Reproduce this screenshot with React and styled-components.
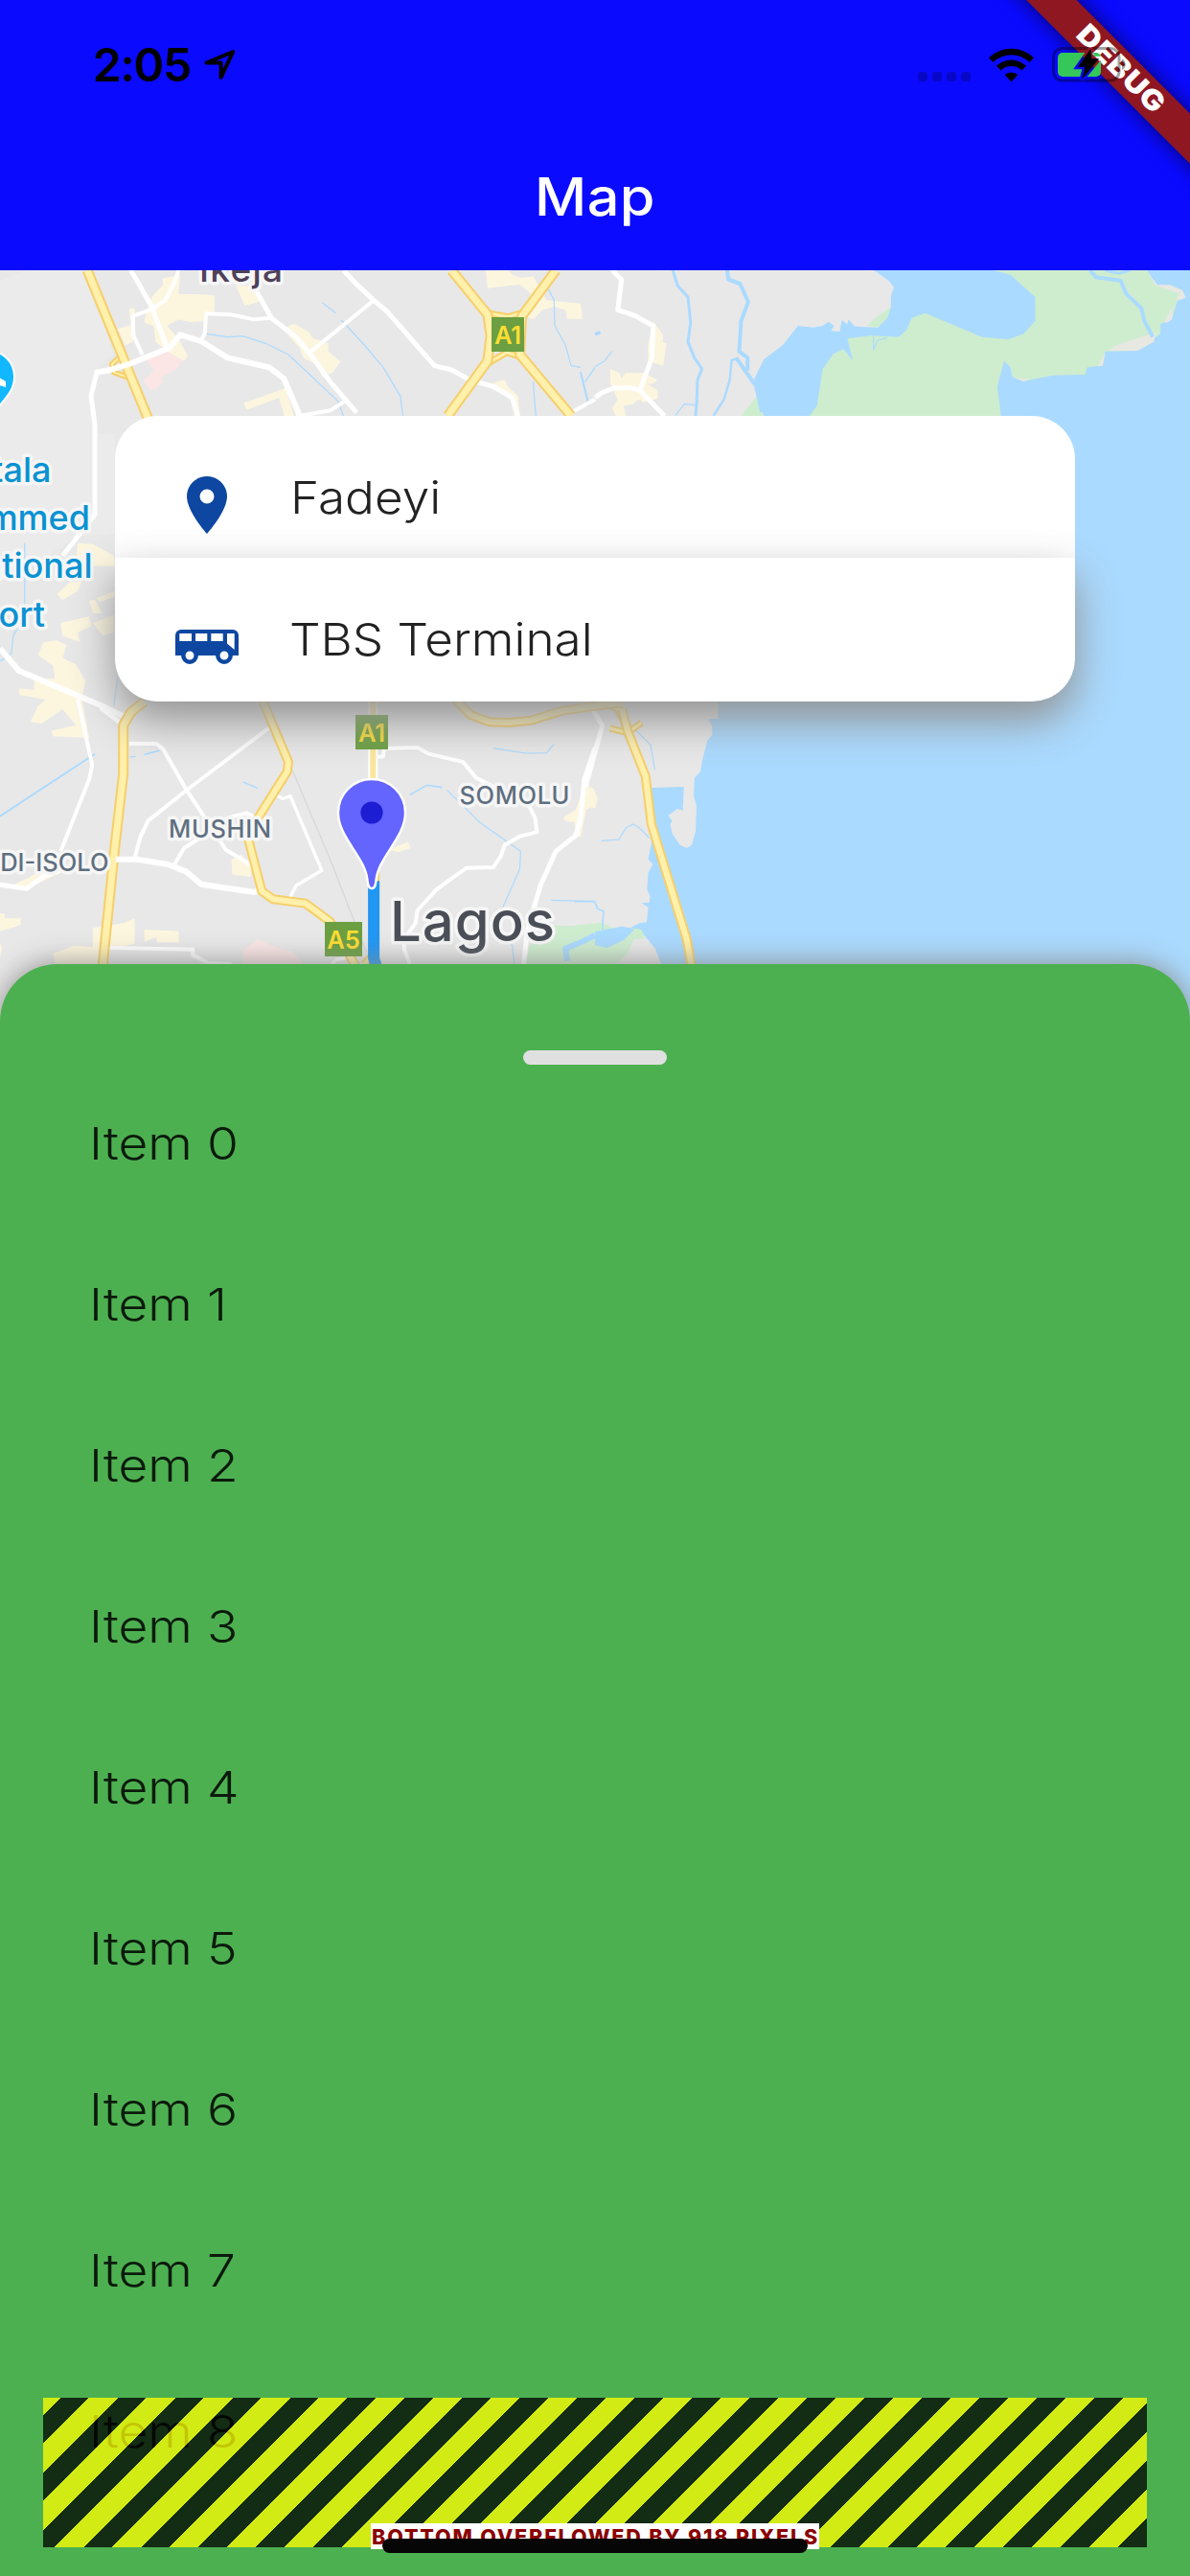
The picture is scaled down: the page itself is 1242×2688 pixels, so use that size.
import React from 'react';
import styled, { createGlobalStyle } from 'styled-components';

const GlobalStyle = createGlobalStyle`
  *, *::before, *::after { box-sizing: border-box; }
  body { margin: 0; background: #4db050; }
`;

const Screen = styled.div`
  position: relative;
  display: flex;
  flex-direction: column;
  width: 1242px;
  height: 2688px;
  overflow: hidden;
  font-family: Inter, "Liberation Sans", sans-serif;
`;

/* ---------- header ---------- */

const Header = styled.header`
  flex: none;
  height: 282px;
  background: #0a0aff;
`;

const StatusBar = styled.div`
  display: flex;
  justify-content: space-between;
  height: 132px;
  padding: 38px 66px 0 97px;
`;

const StatusLeft = styled.div`
  display: flex;
  align-items: flex-start;
`;

const Clock = styled.span`
  width: 117px;
  font-size: 48px;
  font-weight: 600;
  line-height: 60px;
  letter-spacing: -1.2px;
  color: #000;
`;

const StatusIcons = styled.div`
  position: relative;
  z-index: 2;
  display: flex;
  align-items: flex-end;
  height: 48px;
`;

const Glyph = styled.svg`
  display: block;
  flex: none;
  margin: ${(p) => p.$margin || 0};
`;

const Title = styled.h1`
  margin: 0;
  text-align: center;
  font-size: 55px;
  font-weight: 500;
  line-height: 146px;
  letter-spacing: 0.4px;
  transform: scaleX(1.08);
  color: #fff;
`;

const Ribbon = styled.div`
  position: absolute;
  z-index: 1;
  top: 54px;
  right: -78px;
  width: 300px;
  height: 36.6px;
  transform: rotate(45deg) scaleX(1.11);
  background: #8e1722;
  box-shadow: 0 0 20px rgba(0, 0, 0, 0.6);
  text-align: center;
  font-size: 29.4px;
  font-weight: 900;
  line-height: 36.6px;
  letter-spacing: 0.6px;
  color: #fff;
`;

/* ---------- map ---------- */

const MapArea = styled.section`
  flex: none;
  display: grid;
  height: 784px;
`;

const MapCanvas = styled.svg`
  grid-area: 1 / 1;
  display: block;
  font-family: Inter, "Liberation Sans", sans-serif;

  polyline {
    fill: none;
    stroke-linejoin: round;
    vector-effect: non-scaling-stroke;
  }
`;

const SearchCard = styled.div`
  grid-area: 1 / 1;
  align-self: start;
  margin: 152px 120px 0;
  z-index: 1;
`;

const SearchRow = styled.div`
  display: flex;
  align-items: flex-start;
  gap: 50px;
  height: ${(p) => (p.$last ? 150 : 148)}px;
  padding: 57px 60px 0;
  background: #fff;
  border-radius: ${(p) => (p.$last ? '0 0 45px 45px' : '45px 45px 0 0')};
  box-shadow: ${(p) => (p.$last ? '0 20px 45px #929292' : 'none')};
`;

const IconBox = styled.span`
  display: flex;
  align-items: center;
  justify-content: center;
  width: 72px;
  height: 72px;
`;

const Place = styled.span`
  margin-left: ${(p) => p.$inset || 0}px;
  font-size: 47px;
  font-weight: 300;
  line-height: 56px;
  transform: scaleX(1.09);
  transform-origin: left;
  color: #222;
`;

/* ---------- sheet ---------- */

const Sheet = styled.section`
  position: relative;
  z-index: 1;
  flex: 1;
  display: flex;
  flex-direction: column;
  margin-top: -60px;
  padding-top: 90px;
  background: #4db050;
  border-radius: 60px 60px 0 0;
  box-shadow: 0 0 30px #8a8a8a;
`;

const Handle = styled.div`
  flex: none;
  align-self: center;
  width: 150px;
  height: 15px;
  border-radius: 8px;
  background: #e0e0e0;
`;

const List = styled.ul`
  flex: 1;
  min-height: 0;
  overflow: hidden;
  margin: 0;
  padding: 0 0 0 93px;
  list-style: none;
`;

const Item = styled.li`
  height: 168px;
  font-size: 47px;
  font-weight: 300;
  line-height: 164px;
  transform: scaleX(1.135);
  transform-origin: left;
  color: #0b1a0c;
`;

const OverflowStripes = styled.div`
  position: absolute;
  left: 45px;
  right: 45px;
  bottom: 30px;
  height: 156.5px;
  display: flex;
  align-items: flex-end;
  justify-content: center;
  background: repeating-linear-gradient(
    135deg,
    rgba(255, 255, 0, 0.75) 0 12.73px,
    rgba(0, 0, 0, 0.75) 12.73px 33.94px,
    rgba(255, 255, 0, 0.75) 33.94px 42.426px
  );
`;

const OverflowLabel = styled.span`
  width: 468px;
  height: 27px;
  margin-bottom: -1.5px;
  background: #fff;
  text-align: center;
  text-indent: 1px;
  white-space: nowrap;
  font-size: 21.5px;
  font-weight: 800;
  line-height: 28px;
  letter-spacing: 1.85px;
  color: #8b0000;
`;

const HomeIndicator = styled.div`
  position: absolute;
  left: 399px;
  bottom: 24px;
  width: 444px;
  height: 15px;
  border-radius: 8px;
  background: #060606;
`;

/* ---------- map drawing ---------- */

const LAND = '#e8e8e8';
const WATER = '#aadaff';
const PARK = '#ceedcf';
const SAND = '#fdf6df';
const PINK = '#fbe6e5';

const Road = ({ points, w = 5 }) => <polyline points={points} stroke="#fff" strokeWidth={w} />;
const Stream = ({ points, w = 1.2 }) => <polyline points={points} stroke={WATER} strokeWidth={w} />;
const Highway = ({ points, w = 10 }) => (
  <>
    <polyline points={points} stroke="#f6cf6b" strokeWidth={w} />
    <polyline points={points} stroke="#fff0ab" strokeWidth={w - 4} />
  </>
);

const Label = ({ x, y, size = 25.5, width, color = '#5f6f80', weight = 500, anchor, children }) => (
  <text
    x={x}
    y={y}
    fontSize={size}
    fontWeight={weight}
    textLength={width}
    textAnchor={anchor}
    fill={color}
    stroke="#f6f6f6"
    strokeWidth="7"
    strokeLinejoin="round"
    paintOrder="stroke"
  >
    {children}
  </text>
);

const Shield = ({ x, y, w = 34, children }) => (
  <g>
    <rect x={x} y={y} width={w} height="36" fill="#6b9f41" />
    <text x={x + w / 2} y={y + 27.5} textAnchor="middle" fontSize="25.5" fontWeight="600" fill="#fddd33">
      {children}
    </text>
  </g>
);

const NorthWest = () => (
  <g transform="translate(0 -12) scale(.39605 .33333)">
    <polygon fill="#ebebeb" points="0,70 60,40 230,40 300,300 250,350 240,430 250,550 303,550 303,860 200,870 100,950 0,950" />
    <g fill={SAND}>
      <polygon points="400,120 430,80 428,62 475,50 470,110 535,112 566,115 565,165 538,170 537,196 500,198 470,190 440,210 470,250 495,305 485,320 440,290 410,260 405,210 380,200 385,170" />
      <polygon points="310,220 345,207 340,155 355,155 355,180 350,260 330,270" />
      <polygon points="622,85 665,85 695,130 645,147" />
      <polygon points="745,220 775,203 815,230 825,250 865,265 865,290 897,322 878,355 850,370 830,330 800,310 790,280" />
      <polygon points="642,452 752,405 775,492 750,492 735,435 650,473" />
      <polygon points="1280,36 1340,36 1350,50 1375,60 1405,55 1430,110 1440,130 1530,140 1535,188 1495,188 1490,160 1460,150 1430,160 1405,190 1385,180 1400,110 1370,80 1285,92" />
      <polygon points="1285,395 1310,385 1330,378 1338,400 1365,430 1370,492 1355,492 1345,440" />
      <polygon points="205,890 245,893 300,930 303,963 200,960" />
      <polygon points="150,1050 185,1012 215,1010 205,1040 165,1068" />
      <polygon points="235,1070 250,1068 270,1110 245,1110" />
      <polygon points="255,1062 303,1040 303,1058 262,1075" />
    </g>
    <polygon fill={PINK} points="383,310 440,290 482,318 465,345 425,372 430,385 412,408 395,410 378,380 405,350" />
    <Stream points="545,235 600,245 640,242 700,265 760,300 890,445 905,492" />
    <Stream points="850,138 885,170" />
    <Stream points="900,192 960,270 1010,340 1055,430 1062,492" />
    <Stream points="1445,95 1460,130 1462,210 1490,270 1505,335 1530,340" />
    <Stream points="1530,355 1552,460" w={2} />
    <Stream points="1568,340 1542,385" />
    <Stream points="1405,385 1412,492" />
    <Stream points="65,890 65,1110" />
    <Road points="345,36 400,150 440,280" />
    <Road points="470,36 460,75 435,130 400,158 350,180 352,240 375,300" w={4} />
    <Road points="255,355 240,430 250,520 250,800 165,930" />
    <Road points="530,258 540,230 543,172 610,175 670,190 715,185" w={4} />
    <Road points="675,100 715,185 780,245 815,295 870,385 940,482" />
    <Road points="815,295 985,130" w={4} />
    <Road points="905,36 940,80 985,130 1020,165 1145,335 1190,348 1240,380 1300,400 1350,435 1365,492" />
    <Road points="790,492 870,475 910,445" w={4} />
    <Road points="1500,485 1568,440" w={4} />
    <Highway points="325,298 295,330 300,355 335,370" w={6} />
    <Highway points="230,36 390,500" w={11} />
    <Road points="250,357 290,348 340,330 445,280 475,238 530,258 600,310 710,340 748,375 790,492" w={6} />
    <Highway points="1285,170 1340,182 1378,168" w={7} />
    <Highway points="1290,325 1335,293 1380,310" w={7} />
    <Highway points="1190,36 1285,175 1293,240 1285,320 1180,492" w={11} />
    <Highway points="1465,36 1375,180 1370,300 1505,492" w={11} />
  </g>
);

const NorthEast = () => (
  <g transform="translate(621 -12) scale(.39605 .33333)">
    <polygon fill={WATER} points="735,36 775,70 788,90 780,115 780,150 770,185 745,215 685,212 668,190 665,205 650,192 645,228 622,226 630,210 615,197 600,210 575,215 535,210 495,270 445,315 420,375 425,430 445,492 445,1300 1568,1300 1568,36" />
    <g fill={PARK}>
      <polygon points="385,492 425,432 445,492" />
      <polygon points="715,210 745,180 780,150 770,185 745,215" />
      <polygon points="565,492 585,460 600,345 628,298 655,283 680,320 665,250 730,240 800,245 820,225 835,185 870,170 1020,245 1090,252 1130,235 1160,195 1160,120 1095,50 1050,36 1455,36 1475,80 1540,110 1520,190 1490,205 1490,235 1430,288 1345,290 1335,335 1297,340 1292,362 1205,365 1130,383 1100,370 1095,340 1078,320 1060,400 1070,492" />
    </g>
    <g fill="#e8e8e2">
      <polygon points="1350,288 1380,268 1480,230 1472,260 1430,288" />
      <polygon points="1455,36 1475,82 1540,110 1532,133 1557,122 1548,98 1515,82 1482,82 1465,55" />
      <polygon points="1500,198 1522,150 1520,190 1508,200" />
      <polygon points="1325,335 1345,295 1338,335" />
      <polygon points="1103,372 1130,376 1145,377 1130,384" />
    </g>
    <Stream points="1305,36 1320,58 1385,68 1400,110 1440,155 1448,195 1470,245" w={4} />
    <Stream points="1345,36 1380,46 1410,36" w={3} />
    <Stream points="734,240 734,285 745,255 770,247" />
    <Stream points="205,36 218,85 245,120 252,200 245,260 262,310 282,345 270,380 268,450 265,492" w={3} />
    <Stream points="348,36 352,65 382,78 404,135 385,195 380,290 402,310 402,350" w={4} />
    <Stream points="372,310 425,400 440,480" w={4} />
    <Stream points="375,312 360,318 355,380 340,440 312,492" w={2.4} />
    <Stream points="212,490 235,455 265,458" />
    <Stream points="0,338 25,320 45,290" />
    <Stream points="0,237 14,230" w={3} />
    <g fill={SAND}>
      <polygon points="155,198 180,240 178,262 188,265 180,335 140,320 140,265" />
      <polygon points="40,345 65,358 70,375 80,358 130,358 165,380 150,392 135,390 165,412 165,437 130,450 115,440 100,455 75,460 82,492 55,492 45,468 60,440 40,390" />
    </g>
    <Road points="45,36 70,65 60,160 105,178 153,210 150,310 118,412 183,492" />
    <Road points="0,435 20,418 50,405 95,404 120,412" />
  </g>
);

const SouthEast = () => (
  <g transform="translate(600 358) scale(.40944 .33333)">
    <polygon fill={LAND} points="0,100 365,100 365,1300 0,1300" />
    <polygon fill={WATER} points="365,100 365,330 340,330 350,355 350,380 337,400 325,460 320,495 305,515 303,570 310,605 308,680 298,725 285,735 268,725 248,690 243,660 248,650 238,632 262,612 275,617 278,543 195,546 190,500 180,475 190,640 195,720 187,770 199,785 187,812 184,865 192,885 190,905 170,907 187,920 183,967 165,970 140,985 165,990 205,1050 220,1098 260,1300 1568,1300 1568,100" />
    <polygon fill={PARK} points="-75,978 0,978 65,968 100,985 140,985 170,990 178,1018 150,1020 135,1065 105,1098 45,1098 0,1060 -75,1098" />
    <polygon fill={WATER} points="18,1018 35,1000 120,980 140,985 152,990 125,1022 82,1048 50,1038 38,1020" />
    <polygon fill={SAND} points="25,540 48,550 58,580 52,610 30,605 15,700 0,700 0,620" />
    <Stream points="68,712 112,708 130,672 148,660 165,672 190,704" />
    <Stream points="0,902 50,902 58,925 73,932 70,990" w={1.6} />
    <Stream points="155,365 193,412 204,490" />
    <Road points="40,290 70,352 30,530 15,650 0,700" />
    <Highway points="75,276 110,295 125,330 135,370" w={10} />
    <Highway points="90,360 135,374 170,342" w={7} />
    <Highway points="120,300 135,370 180,510 195,660 285,1020 298,1110" w={10} />
  </g>
);

const SouthWest = () => (
  <g transform="translate(0 358) scale(.39605 .33333)">
    <g fill={SAND}>
      <polygon points="115,90 150,85 175,100 165,140 200,160 225,210 215,265 235,390 200,388 140,385 135,368 200,350 165,300 110,345 80,340 100,290 120,270 50,255 50,235 90,240 90,205 145,205 140,165 100,130" />
      <polygon points="160,30 235,10 240,40 205,60 210,90 165,70" />
      <polygon points="245,30 300,5 300,60 270,70" />
      <polygon points="610,770 635,755 665,790 660,825 612,818" />
      <polygon points="1025,740 1075,715 1082,735 1050,748" />
      <polygon points="1485,640 1535,600 1540,540 1565,550 1568,600 1545,615 1525,700 1515,655 1490,650" />
      <polygon points="0,940 12,940 12,955 55,955 55,975 0,995" />
      <polygon points="0,1030 5,1050 0,1075" />
      <polygon points="140,1065 195,1040 245,1045 245,985 325,970 355,955 355,1035 290,1050 285,1098 145,1098" />
      <polygon points="380,990 470,995 472,1030 415,1030 410,1015 380,1028" />
      <polygon points="30,852 75,828 110,800 160,812 110,840 70,866" />
    </g>
    <polygon fill={PINK} points="640,1055 680,1020 715,1040 770,1060 800,1098 640,1098" />
    <polygon fill={PARK} points="1385,1098 1395,1040 1460,980 1568,975 1568,1098" />
    <Stream points="1495,1088 1490,1050 1530,1030 1568,1008" w={6} />
    <polyline points="770,490 870,770 965,1060" stroke="#d5d7d9" strokeWidth="1.3" />
    <Stream points="0,635 250,440" w={1.8} />
    <Stream points="340,450 358,448" />
    <Stream points="380,442 420,430" w={1.6} />
    <Stream points="0,150 30,125 35,70 45,50" />
    <Stream points="300,290 310,200" />
    <Stream points="640,528 680,548" />
    <Stream points="1080,568 1125,538 1165,545" w={1.6} />
    <Stream points="1178,553 1265,655 1372,745 1370,800 1325,920" />
    <Stream points="1300,422 1385,438 1440,437 1460,410" />
    <Stream points="1452,898 1568,902" />
    <Stream points="1325,1000 1350,1040 1355,1098" />
    <Road points="0,110 50,180 270,290 325,322 380,285" w={6} />
    <Road points="265,295 320,345 322,370" w={5} />
    <Road points="205,270 243,475 235,520 160,745" w={4} />
    <Road points="340,408 412,408 430,425 490,550 540,640 595,740 665,790" w={4} />
    <Road points="710,358 490,555 390,650 370,700 355,765" w={4} />
    <Road points="460,785 485,735 545,690 600,640 650,625 680,645" w={4} />
    <Road points="730,570 745,580 765,572 848,805 780,853 762,895" w={3.5} />
    <Road points="0,850 70,862 120,820 170,800" w={5} />
    <Road points="285,1047 508,1052 508,1070 550,1095 610,1098" w={4} />
    <Road points="875,1098 885,1085 930,1075" w={3.5} />
    <Road points="990,450 1010,448 1012,423 1100,420 1130,440 1220,465 1255,515 1320,555 1395,605 1410,640 1415,685 1370,698 1330,725 1320,760 1300,795 1230,797 1190,830 1150,865 1100,930 1095,970 1065,1020 1065,1050 1080,1098" w={4} />
    <Road points="1568,420 1540,520 1530,640 1518,695 1465,745 1425,850 1390,990 1380,1098" w={5} />
    <Highway points="380,276 345,310 325,350 325,500 300,760 270,1110" w={11} />
    <Road points="305,770 360,770 440,785 490,808 530,848 670,873 690,863" w={6} />
    <Highway points="693,276 760,465 757,495 680,640 655,710 690,870 720,895 805,908 870,965 940,1110" w={10} />
    <Road points="983,276 983,560" w={10} />
    <polyline points="983,276 983,560" stroke="#fbe79c" strokeWidth="6" />
    <Highway points="1200,270 1240,318 1290,340 1340,342 1400,335 1480,305 1568,290 1640,280" w={10} />
    <Highway points="990,800 990,1060 960,1098" w={8} />
    <polyline points="985,838 985,1080 993,1110" stroke="#2196f3" strokeWidth="12" />
  </g>
);

const LagosMap = () => (
  <MapCanvas width="1242" height="784" viewBox="0 0 1242 784">
    <rect width="1242" height="784" fill={LAND} />
    <NorthWest />
    <NorthEast />
    <SouthEast />
    <SouthWest />

    <path d="M-12 84a27 27 0 0 1 27 27c0 17-12 24-18 34l-9 12z" fill="#12b8ff" stroke="#fff" strokeWidth="2" />
    <path d="M-4 110l10 6v6l-10-3z" fill="#fff" />
    <Label x="208" y="12.3" size={37} width={87} color="#4f4159">Ikeja</Label>
    <Label x="53.5" y="221" size={36} color="#0a92d2" anchor="end">Murtala</Label>
    <Label x="94" y="271" size={36} color="#0a92d2" anchor="end">Muhammed</Label>
    <Label x="96.5" y="321" size={36} color="#0a92d2" anchor="end">International</Label>
    <Label x="47" y="371.5" size={36} color="#0a92d2" anchor="end">Airport</Label>

    <Label x="113.5" y="627" anchor="end">OSHODI-ISOLO</Label>
    <Label x="176" y="592" width={107}>MUSHIN</Label>
    <Label x="479.5" y="557.3" width={115}>SOMOLU</Label>
    <Label x="407" y="700" size={58} width={172} color="#4a4f57">Lagos</Label>

    <Shield x={513} y={49}>A1</Shield>
    <Shield x={371} y={464}>A1</Shield>
    <Shield x={339} y={680} w={39}>A5</Shield>

    <path
      d="M388 645c-4 0-4-5-4.600-9C381 612 353 592 353 566a35 35 0 0 1 70 0c0 26-28 46-30.400 70-.6 4-.6 9-4.600 9z"
      fill="#6464ff"
      stroke="#fff"
      strokeWidth="2.400"
    />
    <circle cx="388" cy="566" r="11.600" fill="#1d1dd4" />
  </MapCanvas>
);

/* ---------- icons ---------- */

const LocationArrow = () => (
  <Glyph width="34" height="34" viewBox="0 0 34 34" $margin="13px 0 0 -1px">
    <path d="M30.200 3L2.500 14.600H17.600V29.800z" fill="none" stroke="#000" strokeWidth="4" strokeLinejoin="round" />
  </Glyph>
);

const CellularDots = () => (
  <Glyph width="55" height="10" viewBox="0 0 55 10" $margin="0 19px 1px 0" fill="#000" fillOpacity=".22">
    {[0, 15, 30, 45].map((x) => (
      <rect key={x} x={x} width="10" height="10" rx="3.300" />
    ))}
  </Glyph>
);

const Wifi = () => (
  <Glyph width="47" height="36" viewBox="0 0 47 36" $margin="0 19px 0 0">
    <path d="M0 10.200A34 34 0 0 1 47 10.200L42.400 14.900A27 27 0 0 0 4.600 14.900z" />
    <path d="M8 18.800A22.500 22.500 0 0 1 39 18.800L34.300 23.500A15.500 15.500 0 0 0 12.700 23.500z" />
    <path d="M16.600 28A10.500 10.500 0 0 1 30.400 28L23.500 35.200z" />
  </Glyph>
);

const Battery = () => (
  <Glyph width="78" height="37" viewBox="0 0 78 37">
    <defs>
      <mask id="boltGap">
        <rect width="78" height="37" fill="#fff" />
        <path d="M40.300 2L27 20.700h7.600L31 34l18-21.700h-7.700z" fill="#000" stroke="#000" strokeWidth="5" />
      </mask>
    </defs>
    <g mask="url(#boltGap)">
      <rect x="1.500" y="1.500" width="68.500" height="33.500" rx="9" fill="none" stroke="#000" strokeOpacity=".36" strokeWidth="3" />
      <rect x="6" y="6" width="45" height="25" rx="5" fill="#35c759" />
    </g>
    <path d="M73 12.500c5 2 5 9.500 0 11.500z" fillOpacity=".36" />
    <path d="M40.300 2L27 20.700h7.600L31 34l18-21.700h-7.700z" />
  </Glyph>
);

const PinIcon = () => (
  <Glyph width="72" height="72" viewBox="0 0 24 24" fill="#0d47a1">
    <path d="M12 2C8.130 2 5 5.130 5 9c0 5.250 7 13 7 13s7-7.750 7-13c0-3.870-3.130-7-7-7zm0 9.500a2.500 2.500 0 0 1 0-5 2.500 2.500 0 0 1 0 5z" />
  </Glyph>
);

const BusIcon = () => (
  <Glyph width="66" height="36" viewBox="0 0 66 36">
    <path d="M6 0H60a6 6 0 0 1 6 6V27H0V6a6 6 0 0 1 6-6z" fill="#0d47a1" />
    <g fill="#fff">
      <rect x="4.300" y="4" width="12.700" height="8" />
      <rect x="21" y="4" width="12.300" height="8" />
      <rect x="37.300" y="4" width="12.400" height="8" />
      <path d="M54 4h7.700v17L54 14.500z" />
    </g>
    <g fill="#fff" stroke="#0d47a1" strokeWidth="4.500">
      <circle cx="15" cy="27" r="6.700" />
      <circle cx="51" cy="27" r="6.700" />
    </g>
  </Glyph>
);

const ITEMS = Array.from({ length: 9 }, (_, i) => `Item ${i}`);

export default function App() {
  return (
    <>
      <GlobalStyle />
      <Screen>
        <Header>
          <StatusBar>
            <StatusLeft>
              <Clock>2:05</Clock>
              <LocationArrow />
            </StatusLeft>
            <StatusIcons>
              <CellularDots />
              <Wifi />
              <Battery />
            </StatusIcons>
          </StatusBar>
          <Title>Map</Title>
        </Header>

        <MapArea>
          <LagosMap />
          <SearchCard>
            <SearchRow>
              <IconBox><PinIcon /></IconBox>
              <Place $inset={1}>Fadeyi</Place>
            </SearchRow>
            <SearchRow $last>
              <IconBox><BusIcon /></IconBox>
              <Place>TBS Terminal</Place>
            </SearchRow>
          </SearchCard>
        </MapArea>

        <Sheet>
          <Handle />
          <List>
            {ITEMS.map((name) => (
              <Item key={name}>{name}</Item>
            ))}
          </List>
          <OverflowStripes>
            <OverflowLabel>BOTTOM OVERFLOWED BY 918 PIXELS</OverflowLabel>
          </OverflowStripes>
          <HomeIndicator />
        </Sheet>

        <Ribbon>DEBUG</Ribbon>
      </Screen>
    </>
  );
}
